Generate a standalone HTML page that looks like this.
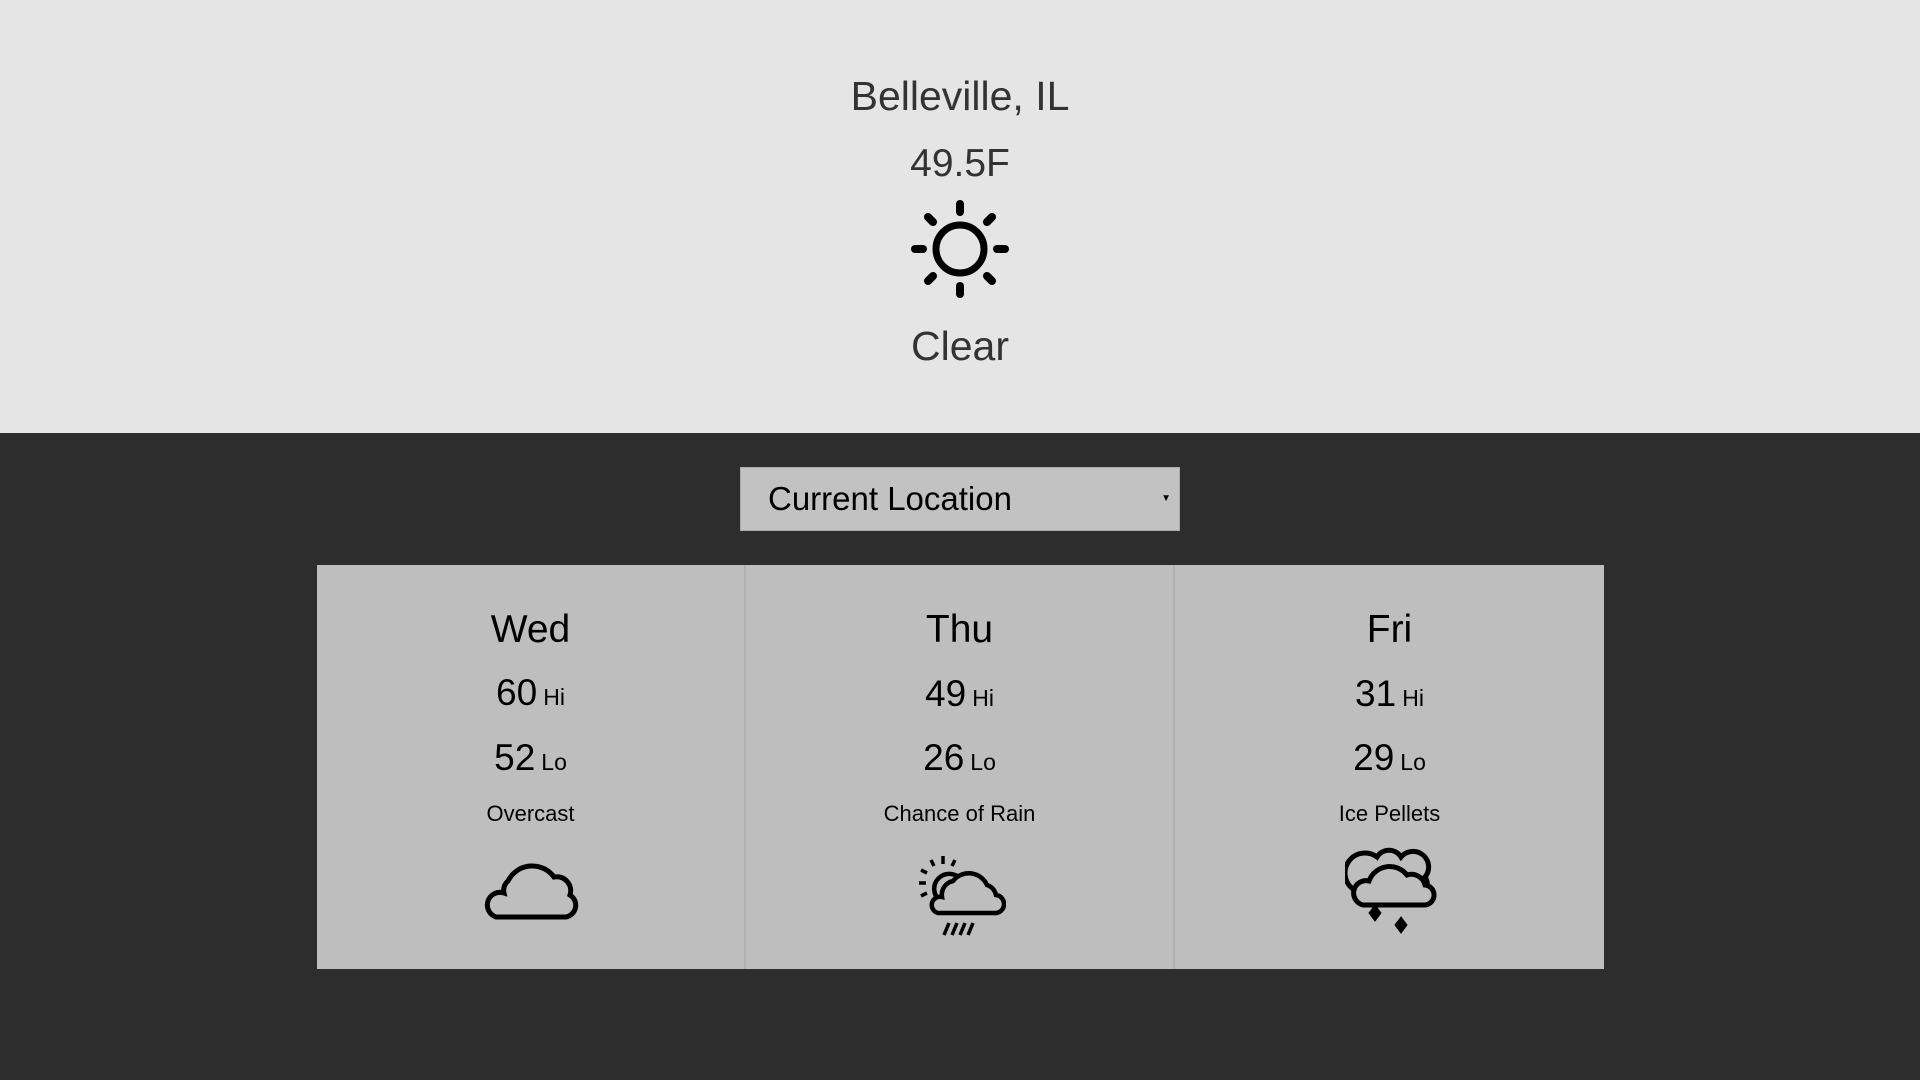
<!DOCTYPE html>
<html><head><style>
*{margin:0;padding:0;box-sizing:border-box}
body{width:1920px;height:1080px;background:#2d2d2d;font-family:"Liberation Sans",sans-serif;overflow:hidden;position:relative}
.top{position:absolute;left:0;top:0;width:1920px;height:433px;background:#e5e5e5;color:#333;text-align:center}
.t{position:absolute;left:0;width:1920px;text-align:center}
.sel{position:absolute;left:740px;top:467px;width:440px;height:64px;background:#c2c2c2;border:1px solid #aaa;font-size:33px;color:#000;padding-left:27px;line-height:62px}
.sel span{position:absolute;right:8px;top:0;font-size:10px}
.card{position:absolute;top:565px;width:429px;height:404px;background:#bebebe;text-align:center;color:#000}
.card div{position:absolute;left:0;width:100%}
.d{top:43px;font-size:39px}
.n{font-size:37px}
.n small{font-size:23px;margin-left:6px}
.ds{top:236px;font-size:22px}
svg{position:absolute}
</style></head><body>
<div class="top">
<div class="t" style="top:73px;font-size:41px">Belleville, IL</div>
<div class="t" style="top:142px;font-size:39px">49.5F</div>
<svg style="left:910px;top:199px" width="100" height="100" viewBox="0 0 100 100" fill="none" stroke="#000" stroke-linecap="round">
<circle cx="50" cy="50" r="24" stroke-width="7"/>
<g stroke-width="8"><line x1="50" y1="5" x2="50" y2="13"/><line x1="50" y1="87" x2="50" y2="95"/><line x1="5" y1="50" x2="13" y2="50"/><line x1="87" y1="50" x2="95" y2="50"/>
<line x1="18" y1="18" x2="23" y2="23"/><line x1="82" y1="18" x2="77" y2="23"/><line x1="18" y1="82" x2="23" y2="77"/><line x1="82" y1="82" x2="77" y2="77"/></g>
</svg>
<div class="t" style="top:323px;font-size:41px">Clear</div>
</div>
<div class="sel">Current Location<span>▼</span></div>
<div class="card" style="left:317px;border-right:2px solid #b0b0b0">
<div class="d">Wed</div>
<div class="n" style="top:107px">60<small>Hi</small></div>
<div class="n" style="top:172px">52<small>Lo</small></div>
<div class="ds">Overcast</div>
<svg style="left:163px;top:290px" width="102" height="66" viewBox="0 0 102 66" fill="none" stroke="#000" stroke-width="5">
<path d="M16 62 H86 A12 12 0 0 0 90 40 A14 14 0 0 0 74 22 A27 27 0 0 0 28 26 A12 12 0 0 0 24 38 A12 12 0 0 0 16 62 Z"/>
</svg>
</div>
<div class="card" style="left:746px;border-right:2px solid #b0b0b0">
<div class="d">Thu</div>
<div class="n" style="top:108px">49<small>Hi</small></div>
<div class="n" style="top:172px">26<small>Lo</small></div>
<div class="ds">Chance of Rain</div>
<svg style="left:170px;top:288px" width="90" height="84" viewBox="0 0 90 84" fill="none" stroke="#000" stroke-width="4.5">
<path d="M26 49 A15 15 0 1 1 46 28"/>
<path d="M27 3v8M15 7l3 6M39 7l-3 6M5 17l6 3M3 30h7M5 43l6-3" stroke-width="3.5"/>
<path d="M22 60 H78 A9 9 0 0 0 80 42 A13 13 0 0 0 71 32 A20 20 0 0 0 37 28 A14 14 0 0 0 26 44 A8 8 0 0 0 22 60 Z" fill="#bebebe"/>
<path d="M28 82l5-12M36 82l5-12M44 82l5-12M52 82l5-12" stroke-width="3.5"/>
</svg>
</div>
<div class="card" style="left:1175px;width:429px">
<div class="d">Fri</div>
<div class="n" style="top:108px">31<small>Hi</small></div>
<div class="n" style="top:172px">29<small>Lo</small></div>
<div class="ds">Ice Pellets</div>
<svg style="left:170px;top:282px" width="92" height="94" viewBox="0 0 92 94" fill="none" stroke="#000" stroke-width="5">
<path d="M8 42 A18 18 0 0 1 32 10 A14 14 0 0 1 56 10 A14 14 0 0 1 80 30 A12 12 0 0 1 80 44"/>
<path d="M18 58 H78 A10 10 0 0 0 80 38 A14 14 0 0 0 62 28 A22 22 0 0 0 24 34 A12 12 0 0 0 18 58 Z" fill="#bebebe"/>
<path d="M30 58l-6 8 6 8 6-8z M56 70l-6 8 6 8 6-8z" fill="#000" stroke-width="1"/>
</svg>
</div>
</body></html>
